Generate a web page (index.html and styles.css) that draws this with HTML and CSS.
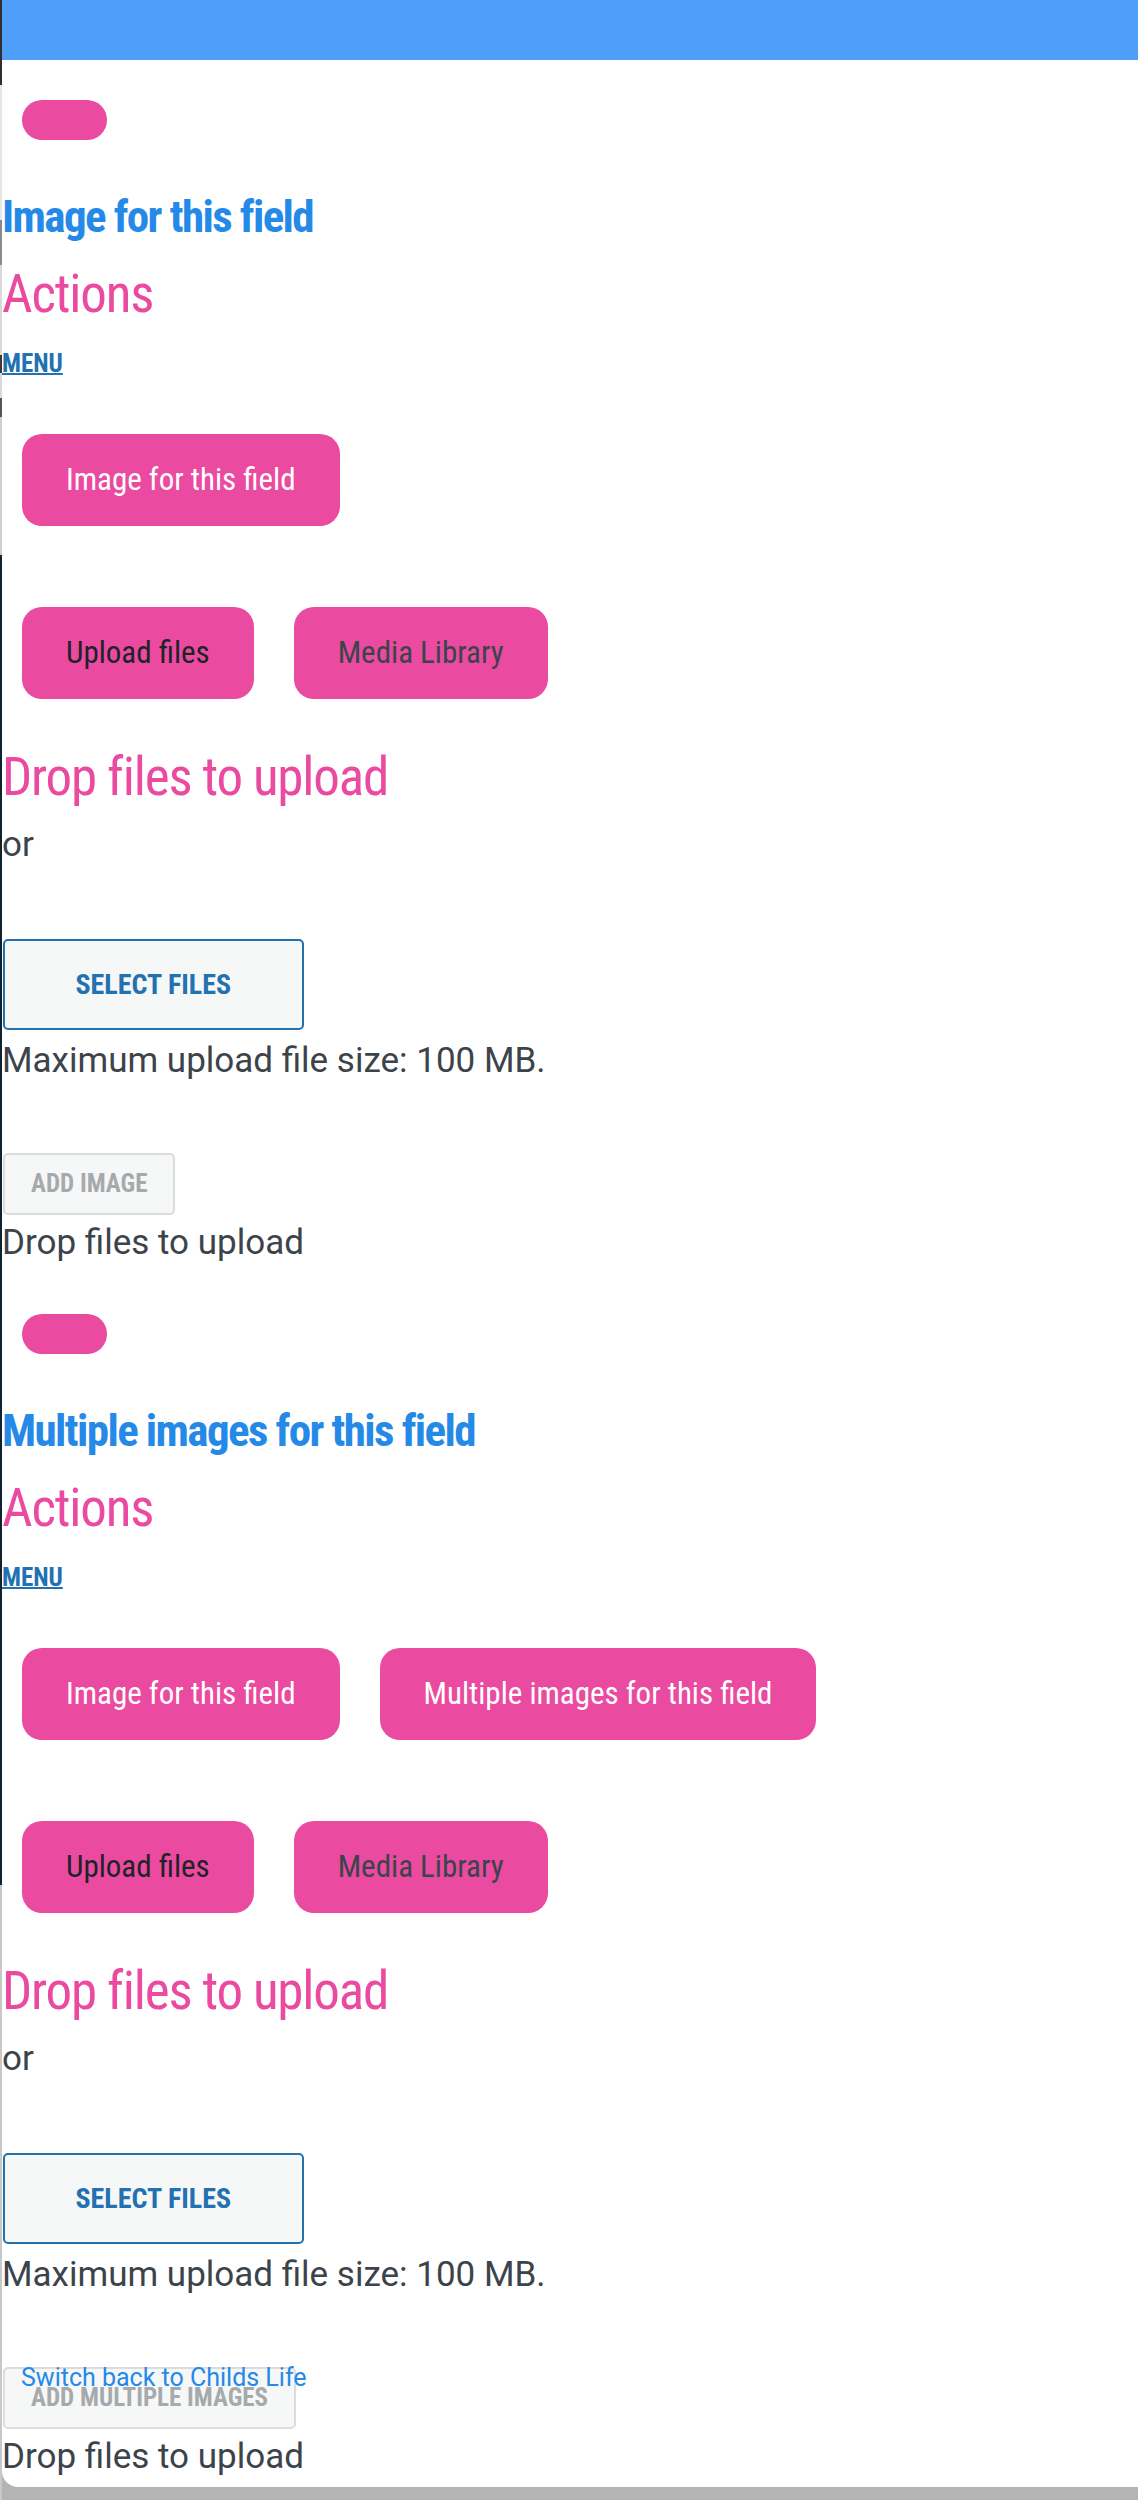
FILE: index.html
```html
<!DOCTYPE html>
<html lang="en">
<head>
    <meta charset="UTF-8">
    <meta name="viewport" content="width=device-width, initial-scale=1.0">
    <title>Image fields</title>
    <link rel="stylesheet" href="styles.css">
</head>
<body>
    <div class="edge"></div>
    <main class="panel">
        <header class="topbar"></header>

        <section class="field">
            <button type="button" class="pill"></button>
            <h2 class="field-title">Image for this field</h2>
            <h3 class="big-title">Actions</h3>
            <div class="menu-row"><a href="#" class="menu-link">MENU</a></div>
            <div class="btn-row tabs">
                <button type="button" class="pink-btn light">Image for this field</button>
            </div>
            <div class="btn-row sources">
                <button type="button" class="pink-btn dark">Upload files</button>
                <button type="button" class="pink-btn muted">Media Library</button>
            </div>
            <h3 class="big-title drop-title">Drop files to upload</h3>
            <p class="text or">or</p>
            <button type="button" class="select-btn">Select Files</button>
            <p class="text max-size">Maximum upload file size: 100 MB.</p>
            <button type="button" class="add-btn" disabled>Add Image</button>
            <p class="text drop-note">Drop files to upload</p>
        </section>

        <section class="field">
            <button type="button" class="pill"></button>
            <h2 class="field-title">Multiple images for this field</h2>
            <h3 class="big-title">Actions</h3>
            <div class="menu-row"><a href="#" class="menu-link">MENU</a></div>
            <div class="btn-row tabs">
                <button type="button" class="pink-btn light">Image for this field</button>
                <button type="button" class="pink-btn light">Multiple images for this field</button>
            </div>
            <div class="btn-row sources">
                <button type="button" class="pink-btn dark">Upload files</button>
                <button type="button" class="pink-btn muted">Media Library</button>
            </div>
            <h3 class="big-title drop-title">Drop files to upload</h3>
            <p class="text or">or</p>
            <button type="button" class="select-btn">Select Files</button>
            <p class="text max-size">Maximum upload file size: 100 MB.</p>
            <button type="button" class="add-btn" disabled>Add Multiple Images</button>
            <p class="text drop-note">Drop files to upload</p>
        </section>

        <a href="#" class="switch-back">Switch back to Childs Life</a>
    </main>
</body>
</html>
```

FILE: styles.css
```css
:root {
    --pink: #ea4a9f;
    --blue: #2589e8;
    --bar: #4f9ffa;
    --wp-blue: #2271b1;
    --text: #3c434a;
    --condensed: "Roboto Condensed", Roboto, sans-serif;
}

* {
    margin: 0;
    padding: 0;
    box-sizing: border-box;
}

html {
    background: #b4b4b4;
}

body {
    display: flex;
    min-height: 2500px;
    font-family: Roboto, "Liberation Sans", sans-serif;
    color: var(--text);
}

/* the strip of whatever sits behind the sheet */
.edge {
    flex: 0 0 2px;
    background: linear-gradient(to bottom,
        #2f2f2f 0 85px,
        #e6e6e6 85px 220px,
        #8a8a8a 220px 265px,
        #d9d9d9 265px 355px,
        #3a3a3a 355px 373px,
        #d9d9d9 373px 398px,
        #555 398px 417px,
        #cfcfcf 417px 555px,
        #0e2230 555px 1885px,
        #c8c8c8 1885px);
}

.panel {
    flex: 1;
    align-self: flex-start;
    position: relative;
    background: #fff;
    border-bottom-left-radius: 16px;
    padding-bottom: 10px;
}

.topbar {
    height: 60px;
    background: var(--bar);
}

.field {
    display: flex;
    flex-direction: column;
    align-items: flex-start;
}

.pill {
    width: 85px;
    height: 40px;
    margin: 40px 0 0 20px;
    border: none;
    border-radius: 20px;
    background: var(--pink);
}

.field + .field .pill {
    margin-top: 51px;
}

.field-title {
    margin-top: 50px;
    font-family: var(--condensed);
    font-stretch: condensed;
    font-size: 45px;
    line-height: 53px;
    font-weight: 700;
    letter-spacing: -1.6px;
    color: var(--blue);
}

.big-title {
    margin-top: 20px;
    font-family: var(--condensed);
    font-stretch: condensed;
    font-size: 53px;
    line-height: 62px;
    font-weight: 400;
    letter-spacing: -1.15px;
    color: var(--pink);
}

.menu-row {
    margin-top: 24px;
    font-size: 25px;
    line-height: 30px;
}

.menu-link {
    font-family: var(--condensed);
    font-stretch: condensed;
    font-weight: 700;
    color: var(--wp-blue);
    text-decoration: underline;
    text-decoration-thickness: 2px;
}

.btn-row {
    display: flex;
    gap: 40px;
    margin-left: 20px;
}

.tabs {
    margin-top: 55px;
}

.sources {
    margin-top: 81px;
}

.pink-btn {
    padding: 28px 44px;
    border: none;
    border-radius: 20px;
    background: var(--pink);
    font-family: var(--condensed);
    font-stretch: condensed;
    font-size: 31px;
    line-height: 36px;
    font-weight: 400;
}

.pink-btn.light {
    color: #fff;
}

.pink-btn.dark {
    color: #1d2327;
}

.pink-btn.muted {
    color: #3c434a;
}

.drop-title {
    margin-top: 47px;
}

.text {
    font-size: 35px;
    line-height: 41px;
}

.or {
    margin-top: 16px;
}

.select-btn,
.add-btn {
    background: #f6f7f7;
    border: 2px solid var(--wp-blue);
    border-radius: 5px;
    font-family: var(--condensed);
    font-stretch: condensed;
    font-weight: 700;
    text-transform: uppercase;
}

.select-btn {
    margin-top: 74px;
    margin-left: 1px;
    padding: 27px 70.5px;
    font-size: 28px;
    line-height: 33px;
    color: var(--wp-blue);
}

.max-size {
    margin-top: 10px;
}

.add-btn {
    margin-top: 72px;
    margin-left: 1px;
    padding: 14px 26px;
    border-color: #dcdcde;
    font-size: 25px;
    line-height: 30px;
    color: #a7aaad;
}

.drop-note {
    margin-top: 7px;
}

.switch-back {
    position: absolute;
    left: 19px;
    top: 2363px;
    font-size: 25px;
    color: var(--blue);
    text-decoration: none;
}
```
